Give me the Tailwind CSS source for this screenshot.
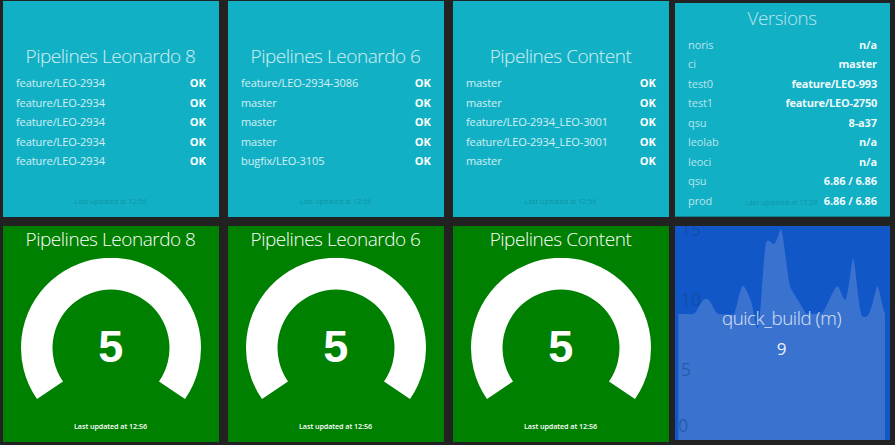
<!DOCTYPE html>
<html lang="en">
<head>
<meta charset="utf-8">
<title>Dashboard</title>
<script src="https://cdn.jsdelivr.net/npm/@tailwindcss/browser@4"></script>
</head>
<body class="h-[445px] w-[895px] overflow-hidden bg-[#222222] font-['Open_Sans','Noto_Sans',sans-serif] text-white">
<main id="board" class="flex h-[445px] gap-[9px] pt-px pl-[3px]"></main>
<script>
const pipelines = [
  ['Pipelines Leonardo 8', Array(5).fill('feature/LEO-2934')],
  ['Pipelines Leonardo 6', ['feature/LEO-2934-3086', 'master', 'master', 'master', 'bugfix/LEO-3105']],
  ['Pipelines Content', ['master', 'master', 'feature/LEO-2934_LEO-3001', 'feature/LEO-2934_LEO-3001', 'master']],
];
const versions = [['noris', 'n/a'], ['ci', 'master'], ['test0', 'feature/LEO-993'], ['test1', 'feature/LEO-2750'],
  ['qsu', '8-a37'], ['leolab', 'n/a'], ['leoci', 'n/a'], ['qsu', '6.86 / 6.86'], ['prod', '6.86 / 6.86']];

const column = ([title, branches]) => `
<div class="flex w-[216px] shrink-0 flex-col gap-[9px]">
  <section class="relative h-[216px] bg-[#12b0c5] px-[13px] pt-[41px]">
    <h1 class="pr-px text-center text-[19px] leading-[28px] font-light tracking-[-0.47px] whitespace-nowrap text-white/80">${title}</h1>
    <ul class="mt-[3px] text-[11px] leading-[19.5px]">
      ${branches.map(b => `<li class="flex justify-between"><span class="tracking-[-0.1px] text-white/80">${b}</span><span class="pr-[0.5px] font-bold tracking-[-0.2px]">OK</span></li>`).join('')}
    </ul>
    <p class="absolute inset-x-0 bottom-[11px] pr-px text-center text-[7.2px] leading-[10px] tracking-[-0.02px] text-black/20">Last updated at 12:56</p>
  </section>
  <section class="flex h-[216px] flex-col items-center bg-[#008000]">
    <h1 class="-mt-px h-[33px] pr-px text-[19px] leading-[28px] font-light tracking-[-0.47px] whitespace-nowrap">${title}</h1>
    <svg class="h-[144px] w-[182px] shrink-0" viewBox="-91 -90 182 144">
      <path fill="#fff" d="M-74 51A90 90 0 1 1 74 51L48 33.5A58.5 58.5 0 1 0 -48 33.5Z"/>
      <text x="-0.3" y="14" text-anchor="middle" fill="#fff" font-family="Liberation Sans, Arial, sans-serif" font-weight="700" font-size="45">5</text>
    </svg>
    <p class="mt-[19px] pr-px text-[7.2px] leading-[10px] font-semibold tracking-[-0.08px]">Last updated at 12:56</p>
  </section>
</div>`;

const last = `
<div class="-ml-[3px] flex w-[215px] shrink-0 flex-col gap-[9px] pt-[2px]">
  <section class="relative h-[214px] border-b border-[#17818f] bg-[#12b0c5] px-[13px] pt-[1px]">
    <h1 class="pr-px text-center text-[18.8px] leading-[28px] font-light tracking-[-0.4px] text-white/70">Versions</h1>
    <ul class="mt-[2.5px] text-[11px] leading-[19.55px]">
      ${versions.map(([n, v]) => `<li class="flex justify-between"><span class="tracking-[-0.1px] text-white/70">${n}</span><span class="font-bold text-white/95 ${v.length > 11 ? 'tracking-[-0.23px]' : 'tracking-[-0.1px]'}">${v}</span></li>`).join('')}
    </ul>
    <p class="absolute inset-x-0 bottom-[9px] pr-[2px] text-center text-[7.2px] leading-[10px] text-black/20">Last updated at 15:28</p>
  </section>
  <section class="relative h-[214px] overflow-hidden bg-[#1257c8]">
    <svg class="absolute inset-0 h-[214px] w-[215px]" viewBox="30 33 645 642">
      <path fill="#3a72cf" d="M40 675V297H70C95 300 92 290 110 261Q123 242 136 261C151 289 154 297 163 298L207 299C216 277 226 214 234 212C239 212 253 244 257 255C265 280 271 330 278 341C288 335 294 100 305 79C315 73 320 86 327 88C338 76 343 44 349 42C357 70 369 200 377 219C391 245 401 257 423 296H470C482 286 507 214 518 213C525 218 533 255 542 255C550 242 560 131 565 129C572 155 581 284 591 303Q597 309 607 303C621 290 632 214 638 213C645 228 650 270 660 296V675Z"/>
      <g fill="#103a78" fill-opacity=".42" font-family="Open Sans, sans-serif" font-size="52">
        <text x="48" y="63">15</text><text x="48" y="273">10</text><text x="48" y="482">5</text><text x="40" y="651">0</text>
      </g>
    </svg>
    <div class="relative flex flex-col items-center pt-[78px]">
      <h1 class="pr-[2px] text-[18.8px] leading-[28px] font-light tracking-[-0.45px] text-white/80">quick_build (m)</h1>
      <p class="mt-[5px] mr-[2px] text-[17px] leading-[24px] text-white/90">9</p>
    </div>
  </section>
</div>`;
document.getElementById('board').innerHTML = pipelines.map(column).join('') + last;
</script>
</body>
</html>
